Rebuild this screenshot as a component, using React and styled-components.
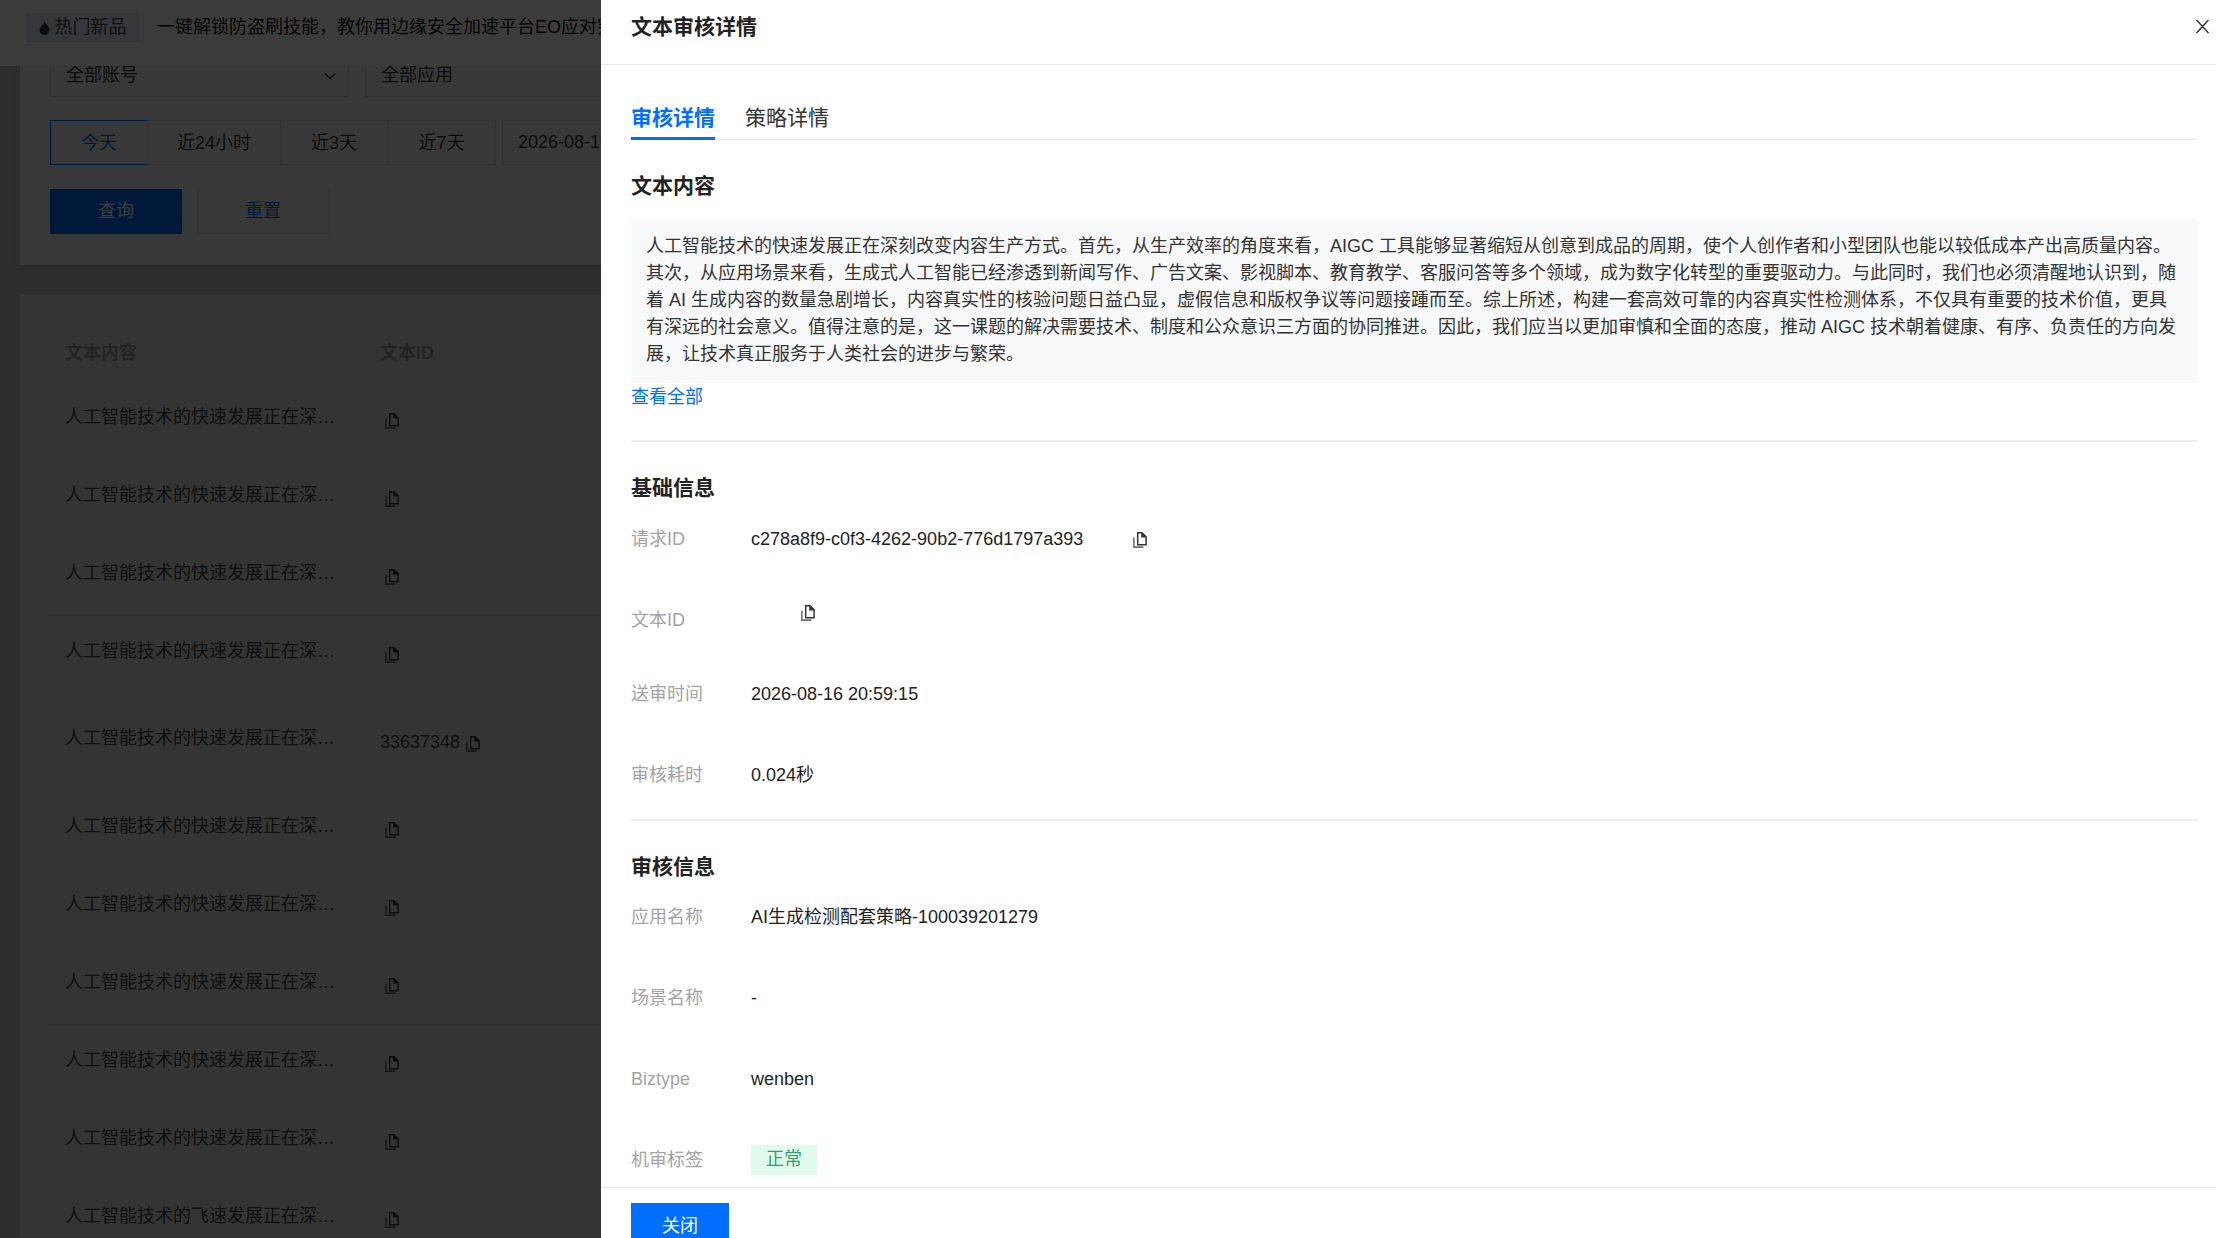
import React from "react";
import styled, { createGlobalStyle } from "styled-components";

const Global = createGlobalStyle`
  html, body { margin: 0; padding: 0; height: 100%; overflow: hidden; }
  body { font-family: "Liberation Sans", "Noto Sans CJK SC", sans-serif; font-size: 18px; line-height: 27px; color: #333; background: #c8c8c8; }
  * { box-sizing: border-box; }
`;

const Page = styled.div`
  height: 1238px;
  overflow: hidden;
  display: flex;
  flex-direction: column;
`;
const Banner = styled.div`
  position: relative;
  z-index: 2;
  flex: none;
  height: 66px;
  padding-left: 26px;
  background: #fff;
  display: flex;
  align-items: flex-start;
  gap: 18px;
  white-space: nowrap;
  overflow: hidden;
`;
const HotTag = styled.span`
  margin-top: 13px;
  width: 113px;
  height: 29px;
  display: flex;
  align-items: center;
  justify-content: center;
  gap: 5px;
  background: #e6ecf8;
  border: 1px solid #d6e0f2;
  color: #444;
`;
const BannerText = styled.span`
  margin-top: 14px;
  color: #111;
`;
const Content = styled.div`
  flex: 1;
  padding: 0 0 0 20px;
  overflow: hidden;
  display: flex;
  flex-direction: column;
  gap: 30px;
`;
const FilterCard = styled.section`
  flex: none;
  margin-top: -14px;
  padding: 0 30px 31px;
  background: #f2f2f2;
  box-shadow: 0 2px 10px rgba(0, 0, 0, 0.12);
  display: flex;
  flex-direction: column;
  gap: 23px;
`;
const SelectRow = styled.div`
  display: flex;
  gap: 16px;
`;
const SelectBox = styled.div`
  width: ${(p) => p.$w}px;
  height: 45px;
  padding: 2px 11px 0 15px;
  border: 1.5px solid #d6d8de;
  display: flex;
  align-items: center;
  justify-content: space-between;
  color: #333;
`;
const RangeRow = styled.div`
  display: flex;
  white-space: nowrap;
`;
const RangeBtn = styled.div`
  width: ${(p) => p.$w}px;
  height: 45px;
  padding-top: 1px;
  display: flex;
  align-items: center;
  justify-content: center;
  color: ${(p) => (p.$on ? "#006eff" : "#333")};
  border: 1.5px solid ${(p) => (p.$on ? "#006eff" : "#d6d8de")};
  margin-left: ${(p) => (p.$on ? 0 : "-1px")};
`;
const DateBox = styled.div`
  margin-left: 6px;
  width: 500px;
  height: 45px;
  padding: 0 15px;
  border: 1.5px solid #d6d8de;
  display: flex;
  align-items: center;
`;
const ActionRow = styled.div`
  display: flex;
  gap: 15px;
  margin-top: 1px;
`;
const ActionBtn = styled.div`
  width: 132px;
  height: 45px;
  display: flex;
  align-items: center;
  justify-content: center;
  color: ${(p) => (p.$primary ? "#fff" : "#006eff")};
  background: ${(p) => (p.$primary ? "#006eff" : "transparent")};
  border: 1.5px solid ${(p) => (p.$primary ? "#006eff" : "#d6d8de")};
`;
const TableCard = styled.section`
  flex: 1;
  padding: 0 30px;
  background: #e2e2e2;
`;
const HeadRow = styled.div`
  height: 87px;
  padding-top: 45px;
  display: flex;
  font-weight: 700;
  color: #999;
  border-bottom: 1.5px solid #d4d5d8;
`;
const TRow = styled.div`
  height: ${(p) => (p.$tall ? 97 : 78)}px;
  padding-top: ${(p) => (p.$tall ? 31 : 22)}px;
  display: flex;
  color: #444;
  border-bottom: 1.5px solid #d4d5d8;
`;
const ColOne = styled.div`
  flex: none;
  width: 330px;
  padding-left: 15px;
`;
const Clip = styled.div`
  width: 271px;
  white-space: nowrap;
  overflow: hidden;
  text-overflow: ellipsis;
`;
const ColTwo = styled.div`
  display: flex;
  align-items: flex-start;
`;
const IdText = styled.span`
  margin-top: 4px;
`;
const TableIcon = styled.span`
  display: flex;
  color: #333;
  margin: ${(p) => (p.$after ? 11 : 9)}px 0 0 ${(p) => (p.$after ? 6 : 5)}px;
`;
const Overlay = styled.div`
  position: fixed;
  inset: 0;
  z-index: 5;
  background: rgba(0, 0, 0, 0.77);
`;
const Drawer = styled.aside`
  position: fixed;
  z-index: 6;
  top: 0;
  right: 0;
  width: 1615px;
  height: 1238px;
  background: #fff;
  overflow: hidden;
  display: flex;
  flex-direction: column;
`;
const DrawerHead = styled.header`
  flex: none;
  height: 65px;
  padding: 12px 6px 0 30px;
  border-bottom: 1.5px solid #e8eaee;
  display: flex;
  justify-content: space-between;
  align-items: flex-start;
`;
const DrawerTitle = styled.h2`
  margin: 0;
  font-size: 21px;
  line-height: 29px;
  font-weight: 700;
  color: #222;
`;
const CloseBtn = styled.span`
  display: flex;
  margin-top: 7px;
`;
const DrawerBody = styled.div`
  flex: none;
  height: 1122px;
  padding: 37px 18px 0 30px;
  overflow: hidden;
`;
const TabBar = styled.div`
  height: 38px;
  display: flex;
  gap: 30px;
  box-shadow: inset 0 -1.5px 0 #e8e9ec;
`;
const Tab = styled.div`
  height: 38px;
  padding-top: 1px;
  font-size: 21px;
  line-height: 30px;
  font-weight: ${(p) => (p.$on ? 700 : 400)};
  color: ${(p) => (p.$on ? "#006eff" : "#333")};
  border-bottom: 3px solid ${(p) => (p.$on ? "#006eff" : "transparent")};
`;
const SectionTitle = styled.h3`
  margin: ${(p) => p.$top}px 0 ${(p) => p.$bottom}px;
  font-size: 21px;
  line-height: 30px;
  font-weight: 700;
  color: #222;
`;
const TextBox = styled.div`
  padding: 15px;
  height: 165px;
  background: #f8f9fb;
  color: #333;
`;
const MoreLink = styled.a`
  display: block;
  margin-top: 1px;
  color: #006eff;
`;
const Rule = styled.hr`
  margin: ${(p) => p.$top}px 0 0;
  border: 0;
  height: 1.5px;
  background: #edeef0;
`;
const InfoRow = styled.div`
  display: flex;
  align-items: flex-start;
  min-height: 27px;
  margin-bottom: ${(p) => p.$gap}px;
`;
const InfoLabel = styled.span`
  flex: none;
  width: 120px;
  color: #a3a3a3;
`;
const InfoValue = styled.span`
  color: #222;
`;
const InfoIcon = styled.span`
  display: flex;
  color: #333;
  margin: ${(p) => p.$top}px 0 0 50px;
`;
const StatusTag = styled.span`
  width: 66px;
  height: 30px;
  margin-top: -2.5px;
  display: flex;
  align-items: center;
  justify-content: center;
  background: #e0fbec;
  color: #2ba471;
`;
const DrawerFoot = styled.footer`
  flex: 1;
  padding: 15px 0 0 30px;
  border-top: 1.5px solid #e8e9ec;
  overflow: hidden;
`;
const CloseAction = styled.div`
  width: 98px;
  height: 46px;
  display: flex;
  align-items: center;
  justify-content: center;
  background: #006eff;
  color: #fff;
`;

const CopyIcon = () => (
  <svg width="14" height="16" viewBox="0 0 14 16" fill="none">
    <path d="M4.700 0.800H9L13.100 4.900V12.700H4.700Z" stroke="currentColor" strokeWidth="1.500" />
    <path d="M8.200 1V5.500H13V4.500L9.200 1Z" fill="currentColor" />
    <path d="M0.900 5.500V15.100H10.500" stroke="currentColor" strokeWidth="1.600" opacity="0.7" />
  </svg>
);
const FlameIcon = () => (
  <svg width="11" height="14" viewBox="0 0 11 14">
    <path d="M5.600 0C6 3 10.500 5 10.500 9 10.500 12 8.300 14 5.500 14 2.700 14 0.500 12 0.500 9 0.500 5.500 5 3.500 5.600 0Z" fill="#2f3a55" />
  </svg>
);
const Chevron = () => (
  <svg width="14" height="14" viewBox="0 0 14 14" fill="none">
    <path d="M2 4.500L7 9.500 12 4.500" stroke="#444" strokeWidth="1.600" />
  </svg>
);
const CloseIcon = () => (
  <svg width="15" height="15" viewBox="0 0 15 15" fill="none">
    <path d="M1.500 1L13.500 14M13.500 1L1.500 14" stroke="#333" strokeWidth="1.400" />
  </svg>
);

const quick = "人工智能技术的快速发展正在深刻改变内容生产方式";
const rows = [
  { text: quick },
  { text: quick },
  { text: quick },
  { text: quick },
  { text: quick, id: "33637348", tall: true },
  { text: quick },
  { text: quick },
  { text: quick },
  { text: quick },
  { text: quick },
  { text: "人工智能技术的飞速发展正在深刻改变内容生产方式" },
];

const article =
  "人工智能技术的快速发展正在深刻改变内容生产方式。首先，从生产效率的角度来看，AIGC 工具能够显著缩短从创意到成品的周期，使个人创作者和小型团队也能以较低成本产出高质量内容。其次，从应用场景来看，生成式人工智能已经渗透到新闻写作、广告文案、影视脚本、教育教学、客服问答等多个领域，成为数字化转型的重要驱动力。与此同时，我们也必须清醒地认识到，随着 AI 生成内容的数量急剧增长，内容真实性的核验问题日益凸显，虚假信息和版权争议等问题接踵而至。综上所述，构建一套高效可靠的内容真实性检测体系，不仅具有重要的技术价值，更具有深远的社会意义。值得注意的是，这一课题的解决需要技术、制度和公众意识三方面的协同推进。因此，我们应当以更加审慎和全面的态度，推动 AIGC 技术朝着健康、有序、负责任的方向发展，让技术真正服务于人类社会的进步与繁荣。";

export default function App() {
  return (
    <>
      <Global />
      <Page>
        <Banner>
          <HotTag>
            <FlameIcon />
            热门新品
          </HotTag>
          <BannerText>一键解锁防盗刷技能，教你用边缘安全加速平台EO应对突发流量</BannerText>
        </Banner>
        <Content>
          <FilterCard>
            <SelectRow>
              <SelectBox $w={299}>
                全部账号
                <Chevron />
              </SelectBox>
              <SelectBox $w={299}>
                全部应用
                <Chevron />
              </SelectBox>
            </SelectRow>
            <RangeRow>
              <RangeBtn $w={98} $on>今天</RangeBtn>
              <RangeBtn $w={134}>近24小时</RangeBtn>
              <RangeBtn $w={108}>近3天</RangeBtn>
              <RangeBtn $w={109}>近7天</RangeBtn>
              <DateBox>2026-08-16 00:00:00</DateBox>
            </RangeRow>
            <ActionRow>
              <ActionBtn $primary>查询</ActionBtn>
              <ActionBtn>重置</ActionBtn>
            </ActionRow>
          </FilterCard>
          <TableCard>
            <HeadRow>
              <ColOne>文本内容</ColOne>
              <ColTwo>文本ID</ColTwo>
            </HeadRow>
            {rows.map((r, i) => (
              <TRow key={i} $tall={r.tall}>
                <ColOne>
                  <Clip>{r.text}</Clip>
                </ColOne>
                <ColTwo>
                  {r.id && <IdText>{r.id}</IdText>}
                  <TableIcon $after={!!r.id}>
                    <CopyIcon />
                  </TableIcon>
                </ColTwo>
              </TRow>
            ))}
          </TableCard>
        </Content>
      </Page>
      <Overlay />
      <Drawer>
        <DrawerHead>
          <DrawerTitle>文本审核详情</DrawerTitle>
          <CloseBtn>
            <CloseIcon />
          </CloseBtn>
        </DrawerHead>
        <DrawerBody>
          <TabBar>
            <Tab $on>审核详情</Tab>
            <Tab>策略详情</Tab>
          </TabBar>
          <SectionTitle $top={31} $bottom={17}>文本内容</SectionTitle>
          <TextBox>{article}</TextBox>
          <MoreLink>查看全部</MoreLink>
          <Rule $top={29} />
          <SectionTitle $top={31} $bottom={23.500}>基础信息</SectionTitle>
          <InfoRow $gap={54}>
            <InfoLabel>请求ID</InfoLabel>
            <InfoValue>c278a8f9-c0f3-4262-90b2-776d1797a393</InfoValue>
            <InfoIcon $top={6}>
              <CopyIcon />
            </InfoIcon>
          </InfoRow>
          <InfoRow $gap={47}>
            <InfoLabel>文本ID</InfoLabel>
            <InfoIcon $top={-2}>
              <CopyIcon />
            </InfoIcon>
          </InfoRow>
          <InfoRow $gap={54}>
            <InfoLabel>送审时间</InfoLabel>
            <InfoValue>2026-08-16 20:59:15</InfoValue>
          </InfoRow>
          <InfoRow $gap={0}>
            <InfoLabel>审核耗时</InfoLabel>
            <InfoValue>0.024秒</InfoValue>
          </InfoRow>
          <Rule $top={30} />
          <SectionTitle $top={31} $bottom={22.500}>审核信息</SectionTitle>
          <InfoRow $gap={54}>
            <InfoLabel>应用名称</InfoLabel>
            <InfoValue>AI生成检测配套策略-100039201279</InfoValue>
          </InfoRow>
          <InfoRow $gap={54}>
            <InfoLabel>场景名称</InfoLabel>
            <InfoValue>-</InfoValue>
          </InfoRow>
          <InfoRow $gap={54}>
            <InfoLabel>Biztype</InfoLabel>
            <InfoValue>wenben</InfoValue>
          </InfoRow>
          <InfoRow $gap={0}>
            <InfoLabel>机审标签</InfoLabel>
            <StatusTag>正常</StatusTag>
          </InfoRow>
        </DrawerBody>
        <DrawerFoot>
          <CloseAction>关闭</CloseAction>
        </DrawerFoot>
      </Drawer>
    </>
  );
}
